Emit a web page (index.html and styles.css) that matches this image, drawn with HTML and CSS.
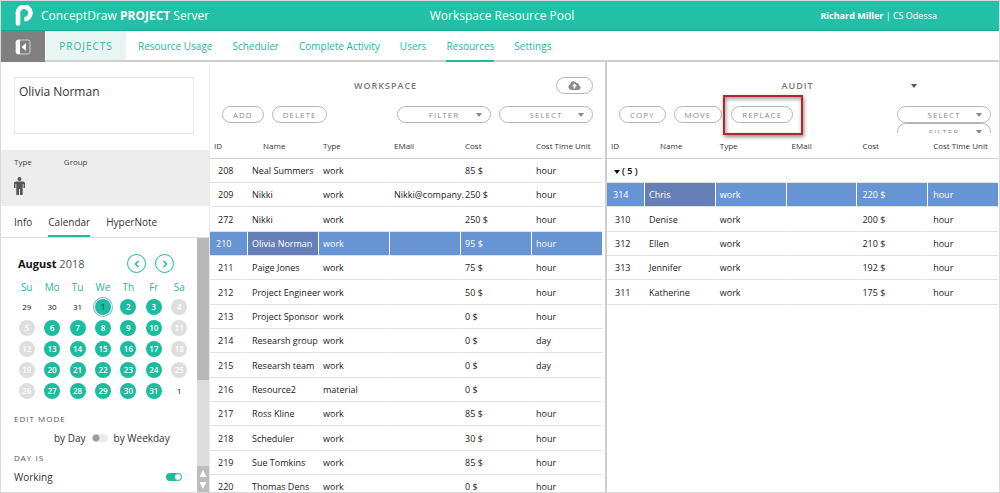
FILE: index.html
```html
<!DOCTYPE html>
<html lang="en">
<head>
<meta charset="utf-8">
<title>ConceptDraw PROJECT Server</title>
<link rel="stylesheet" href="styles.css">
</head>
<body>
<div class="app">
  <header class="topbar">
    <div class="brand">
      <svg class="brand-logo" width="18" height="22" viewBox="0 0 18 22" aria-hidden="true"><path d="M3 19V9.200A6.300 6.300 0 1 1 9.300 14.300" fill="none" stroke="#fff" stroke-width="4.600"/><path d="M.7 18.500h4.600A2.300 2.300 0 0 1 .7 18.500Z" fill="#fff"/></svg>
      <span>ConceptDraw <b>PROJECT</b> Server</span>
    </div>
    <h1 class="page-title">Workspace Resource Pool</h1>
    <div class="account"><b>Richard Miller</b> | CS Odessa</div>
  </header>

  <nav class="nav">
    <button class="nav-toggle" aria-label="Collapse panel">
      <svg width="16" height="16" viewBox="0 0 16 16"><rect x="1" y="1" width="14" height="14" rx="2" fill="none" stroke="#d5d5d5"/><path d="M1 2.500A2 2 0 0 1 3 1h2v14H3A2 2 0 0 1 1 13Z" fill="#fff"/><path d="M11 4v8L6.500 8Z" fill="#fff"/></svg>
    </button>
    <a class="nav-home" href="#">PROJECTS</a>
    <div class="nav-links">
      <a href="#">Resource Usage</a>
      <a href="#">Scheduler</a>
      <a href="#">Complete Activity</a>
      <a href="#">Users</a>
      <a class="is-active" href="#">Resources</a>
      <a href="#">Settings</a>
    </div>
  </nav>

  <main class="columns">
    <aside class="side">
      <div class="side-name"><textarea aria-label="Resource name">Olivia Norman</textarea></div>
      <div class="side-type">
        <div class="type-cell">Type
          <svg width="11" height="18" viewBox="0 0 11 18" aria-hidden="true"><circle cx="5.500" cy="2" r="2" fill="#555"/><path d="M2 4.500h7a2 2 0 0 1 2 2V11H9.500V7H8.700v11H6v-6H5v6H2.300V7H1.500v4H0V6.500a2 2 0 0 1 2-2Z" fill="#555"/></svg>
        </div>
        <div class="type-cell">Group</div>
      </div>
      <div class="side-tabs">
        <a href="#">Info</a>
        <a class="is-active" href="#">Calendar</a>
        <a href="#">HyperNote</a>
      </div>
      <div class="side-scroll">
        <div class="side-body">
          <div class="month">
            <div class="month-name"><b>August</b> 2018</div>
            <div class="month-nav">
              <button aria-label="Previous month"><svg width="8" height="8" viewBox="0 0 8 8"><path d="M5.500 1 2.500 4l3 3" fill="none" stroke="#1bbc9f" stroke-width="1.500"/></svg></button>
              <button aria-label="Next month"><svg width="8" height="8" viewBox="0 0 8 8"><path d="M2.500 1l3 3-3 3" fill="none" stroke="#1bbc9f" stroke-width="1.500"/></svg></button>
            </div>
          </div>
          <table class="calendar">
            <thead><tr><th>Su</th><th>Mo</th><th>Tu</th><th>We</th><th>Th</th><th>Fr</th><th>Sa</th></tr></thead>
            <tbody>
              <tr><td>29</td><td>30</td><td>31</td><td><span class="on today">1</span></td><td><span class="on">2</span></td><td><span class="on">3</span></td><td><span class="off">4</span></td></tr>
              <tr><td><span class="off">5</span></td><td><span class="on">6</span></td><td><span class="on">7</span></td><td><span class="on">8</span></td><td><span class="on">9</span></td><td><span class="on">10</span></td><td><span class="off">11</span></td></tr>
              <tr><td><span class="off">12</span></td><td><span class="on">13</span></td><td><span class="on">14</span></td><td><span class="on">15</span></td><td><span class="on">16</span></td><td><span class="on">17</span></td><td><span class="off">18</span></td></tr>
              <tr><td><span class="off">19</span></td><td><span class="on">20</span></td><td><span class="on">21</span></td><td><span class="on">22</span></td><td><span class="on">23</span></td><td><span class="on">24</span></td><td><span class="off">25</span></td></tr>
              <tr><td><span class="off">26</span></td><td><span class="on">27</span></td><td><span class="on">28</span></td><td><span class="on">29</span></td><td><span class="on">30</span></td><td><span class="on">31</span></td><td>1</td></tr>
            </tbody>
          </table>
          <div class="side-label">EDIT MODE</div>
          <div class="mode-row">
            <span>by Day</span>
            <input class="switch" type="checkbox" aria-label="Edit by weekday">
            <span>by Weekday</span>
          </div>
          <div class="side-label">DAY IS</div>
          <div class="working-row">
            <label for="working">Working</label>
            <input class="switch" id="working" type="checkbox" checked>
          </div>
        </div>
        <div class="scrollbar">
          <div class="scroll-thumb"></div>
          <div class="scroll-arrows">
            <svg width="8" height="8" viewBox="0 0 8 8"><path d="M4 1l3.500 7h-7Z" fill="#fff"/></svg>
            <svg width="8" height="8" viewBox="0 0 8 8"><path d="M4 7 .5 0h7Z" fill="#fff"/></svg>
          </div>
        </div>
      </div>
    </aside>

    <section class="pane workspace">
      <div class="pane-head">
        <h2>WORKSPACE</h2>
        <button class="pill pill-upload" aria-label="Upload"><svg width="13" height="9" viewBox="0 0 13 9"><path d="M3.300 9A3.100 3.100 0 0 1 2 3.200 3.600 3.600 0 0 1 8.600 1.900 2.200 2.200 0 0 1 11 4.400 2.400 2.400 0 0 1 10.600 9Z" fill="#8c8c8c"/><path d="M6.500 2.500 9 5.200H7.300v2.300H5.700V5.200H4Z" fill="#fff"/></svg></button>
      </div>
      <div class="toolbar">
        <button class="pill">ADD</button>
        <button class="pill">DELETE</button>
        <div class="drops">
          <label class="drop"><select class="pill" aria-label="Filter"><option>FILTER</option></select></label>
          <label class="drop"><select class="pill" aria-label="Select"><option>SELECT</option></select></label>
        </div>
      </div>
      <table class="grid">
        <colgroup><col class="c-id"><col><col><col><col><col></colgroup>
        <thead><tr><th>ID</th><th>Name</th><th>Type</th><th>EMail</th><th>Cost</th><th>Cost Time Unit</th></tr></thead>
        <tbody>
          <tr><td>208</td><td>Neal Summers</td><td>work</td><td></td><td>85 $</td><td>hour</td></tr>
          <tr><td>209</td><td>Nikki</td><td>work</td><td>Nikki@company.</td><td>250 $</td><td>hour</td></tr>
          <tr><td>272</td><td>Nikki</td><td>work</td><td></td><td>250 $</td><td>hour</td></tr>
          <tr class="is-selected"><td>210</td><td>Olivia Norman</td><td>work</td><td></td><td>95 $</td><td>hour</td></tr>
          <tr><td>211</td><td>Paige Jones</td><td>work</td><td></td><td>75 $</td><td>hour</td></tr>
          <tr><td>212</td><td>Project Engineer</td><td>work</td><td></td><td>50 $</td><td>hour</td></tr>
          <tr><td>213</td><td>Project Sponsor</td><td>work</td><td></td><td>0 $</td><td>hour</td></tr>
          <tr><td>214</td><td>Researsh group</td><td>work</td><td></td><td>0 $</td><td>day</td></tr>
          <tr><td>215</td><td>Researsh team</td><td>work</td><td></td><td>0 $</td><td>day</td></tr>
          <tr><td>216</td><td>Resource2</td><td>material</td><td></td><td>0 $</td><td></td></tr>
          <tr><td>217</td><td>Ross Kline</td><td>work</td><td></td><td>85 $</td><td>hour</td></tr>
          <tr><td>218</td><td>Scheduler</td><td>work</td><td></td><td>30 $</td><td>hour</td></tr>
          <tr><td>219</td><td>Sue Tomkins</td><td>work</td><td></td><td>85 $</td><td>hour</td></tr>
          <tr><td>220</td><td>Thomas Dens</td><td>work</td><td></td><td>0 $</td><td>hour</td></tr>
        </tbody>
      </table>
    </section>

    <section class="pane audit">
      <div class="pane-head">
        <h2>AUDIT</h2>
        <button class="head-caret" aria-label="Choose project"></button>
      </div>
      <div class="toolbar">
        <button class="pill">COPY</button>
        <button class="pill">MOVE</button>
        <div class="callout"><button class="pill">REPLACE</button></div>
        <div class="drops drops-stacked">
          <label class="drop"><select class="pill" aria-label="Select"><option>SELECT</option></select></label>
          <label class="drop"><select class="pill" aria-label="Filter"><option>FILTER</option></select></label>
        </div>
      </div>
      <table class="grid">
        <colgroup><col class="c-id"><col><col><col><col><col></colgroup>
        <thead><tr><th>ID</th><th>Name</th><th>Type</th><th>EMail</th><th>Cost</th><th>Cost Time Unit</th></tr></thead>
        <tbody>
          <tr class="group"><td colspan="6"><span class="group-caret"></span>( 5 )</td></tr>
          <tr class="is-selected"><td>314</td><td>Chris</td><td>work</td><td></td><td>220 $</td><td>hour</td></tr>
          <tr><td>310</td><td>Denise</td><td>work</td><td></td><td>200 $</td><td>hour</td></tr>
          <tr><td>312</td><td>Ellen</td><td>work</td><td></td><td>210 $</td><td>hour</td></tr>
          <tr><td>313</td><td>Jennifer</td><td>work</td><td></td><td>192 $</td><td>hour</td></tr>
          <tr><td>311</td><td>Katherine</td><td>work</td><td></td><td>175 $</td><td>hour</td></tr>
        </tbody>
      </table>
    </section>
  </main>
</div>
</body>
</html>
```
FILE: styles.css
```css
* { box-sizing: border-box; }

body {
  margin: 0;
  font-family: "Open Sans", "Noto Sans", sans-serif;
  font-size: 9px;
  color: #333;
  background: #fff;
}

button, select, textarea, input { font: inherit; color: inherit; margin: 0; }
a { color: inherit; text-decoration: none; }
button { cursor: pointer; }

.app {
  display: flex;
  flex-direction: column;
  height: 100vh;
  border: 1px solid #d9d9d9;
  overflow: hidden;
}

/* Top bar */
.topbar {
  display: grid;
  grid-template-columns: 1fr auto 1fr;
  align-items: center;
  height: 30px;
  flex: none;
  padding: 0 10px 0 14px;
  background: #23c0a8;
  border-bottom: 1px solid #12ab93;
  color: #fff;
}
.brand { display: flex; align-items: center; gap: 8px; font-size: 12px; }
.brand-logo { flex: none; }
.page-title { margin: 0; font-size: 12px; font-weight: 400; }
.account { padding-right: 52px; text-align: right; }

/* Navigation */
.nav {
  display: flex;
  height: 31px;
  flex: none;
  border-bottom: 2px solid #cfcfcf;
  color: #2ab59d;
}
.nav-toggle {
  display: flex;
  align-items: center;
  justify-content: center;
  width: 44px;
  height: 31px;
  padding: 0;
  border: 0;
  background: #808080;
}
.nav-home {
  display: flex;
  align-items: center;
  justify-content: center;
  width: 80px;
  margin-left: 1px;
  font-size: 10px;
  letter-spacing: 1px;
  background: #e9f5f3;
}
.nav-links { display: flex; gap: 20px; padding-left: 12px; font-size: 10px; }
.nav-links a { height: 31px; line-height: 30px; }
.nav-links .is-active { border-bottom: 2px solid #1bbc9f; }

.columns {
  display: grid;
  grid-template-columns: 209px 397fr 392fr;
  flex: 1;
  min-height: 0;
}

/* Sidebar */
.side { display: flex; flex-direction: column; min-width: 0; min-height: 0; border-right: 1px solid #e8e8e8; }
.side-name { padding: 15px 15px 16px 13px; }
.side-name textarea {
  display: block;
  width: 100%;
  height: 57px;
  padding: 5px 4px;
  border: 1px solid #e6e6e6;
  font-size: 12px;
  line-height: 18px;
  resize: none;
}
.side-type { display: flex; gap: 32px; height: 56px; flex: none; padding: 6px 13px; background: #ededed; font-size: 8px; line-height: 12px; color: #444; }
.type-cell svg { display: block; margin-top: 9px; }
.side-tabs { display: flex; gap: 16px; flex: none; padding-left: 13px; border-bottom: 1px solid #dcdcdc; font-size: 10px; }
.side-tabs a { height: 31px; line-height: 32px; }
.side-tabs .is-active { border-bottom: 2px solid #1bbc9f; }
.side-scroll { display: flex; flex: 1; min-height: 0; overflow: hidden; }
.side-body { flex: 1; min-width: 0; padding: 16px 5px 0 13px; }
.month { display: flex; justify-content: space-between; align-items: center; padding: 0 18px 0 4px; }
.month-name { font-size: 11px; color: #555; }
.month-name b { color: #111; }
.month-nav { display: flex; gap: 9px; }
.month-nav button {
  display: flex;
  align-items: center;
  justify-content: center;
  width: 19px;
  height: 19px;
  padding: 0;
  border: 1px solid #1bbc9f;
  border-radius: 50%;
  background: #fff;
}
.calendar { table-layout: fixed; width: 100%; border-collapse: collapse; margin-top: 4px; font-size: 8px; text-align: center; color: #111; }
.calendar th { height: 19px; padding: 0; font-size: 10px; font-weight: 400; color: #2ab59d; }
.calendar td { height: 21px; padding: 0; }
.calendar span { display: block; width: 16px; margin: 0 auto; border-radius: 50%; line-height: 16px; font-weight: 600; color: #fff; }
.calendar .on { background: #1bbc9f; }
.calendar .off { background: #dedede; }
.calendar .today { color: #1c6e60; box-shadow: 0 0 0 1px #fff, 0 0 0 2px #8fa8dc; }

.side-label { margin-top: 12px; font-size: 8px; line-height: 12px; letter-spacing: 1px; color: #555; }
.mode-row { display: flex; align-items: center; gap: 6px; height: 16px; margin-top: 5px; padding-left: 40px; font-size: 10px; }
.mode-row + .side-label { margin-top: 6px; }
.working-row { display: flex; align-items: center; justify-content: space-between; height: 16px; margin-top: 5px; padding-right: 10px; font-size: 10px; }
.switch {
  appearance: none;
  width: 16px;
  height: 8px;
  border-radius: 4px;
  background: radial-gradient(circle at 4px 4px, #9c9c9c 3px, #ececec 4px);
}
.switch:checked { background: radial-gradient(circle at 12px 4px, #fff 2px, #1bbc9f 4px); }

.scrollbar { display: flex; flex-direction: column; justify-content: space-between; flex: none; width: 12px; background: #dcdcdc; }
.scroll-thumb { height: 56%; background: #b8b8b8; }
.scroll-arrows { display: flex; flex-direction: column; align-items: center; gap: 5px; padding: 3px 0 2px; background: #bdbdbd; }
.scroll-arrows svg { display: block; }

/* Panes */
.pane { min-width: 0; overflow: hidden; }
.workspace { border-right: 2px solid #cfcfcf; }
.pane-head { display: grid; grid-template-columns: 3fr auto 4fr; align-items: center; height: 17px; margin: 15px 12px 0; }
.pane-head h2 { grid-column: 2; margin: 0; font-size: 9px; font-weight: 600; letter-spacing: 1px; color: #777; }
.audit .pane-head { grid-template-columns: 11fr auto 12fr; margin-right: 8px; }
.pill {
  display: block;
  height: 17px;
  padding: 0 10px;
  border: 1px solid #b5b5b5;
  border-radius: 9px;
  background: #fff;
  font-size: 8px;
  line-height: 15px;
  letter-spacing: 1px;
  color: #8c8c8c;
}
.pill-upload { justify-self: end; display: flex; align-items: center; padding: 0 11px; }
.toolbar { display: flex; align-items: flex-start; gap: 8px; height: 27px; padding: 0 12px; margin-top: 12px; }
.drops { display: flex; gap: 8px; margin-left: auto; }
.drop { position: relative; display: block; }
.drop select { appearance: none; width: 94px; padding: 0; text-align-last: center; }
.drop::after {
  content: "";
  position: absolute;
  right: 9px;
  top: 7px;
  border: 3px solid transparent;
  border-top: 4px solid #888;
  border-bottom: 0;
  pointer-events: none;
}
.head-caret {
  justify-self: center;
  width: 6px;
  height: 4px;
  margin-left: 24px;
  padding: 0;
  border: 3px solid transparent;
  border-top: 4px solid #555;
  border-bottom: 0;
  background: none;
}
.audit .toolbar { padding-right: 8px; }
.drops-stacked { display: block; overflow: hidden; height: 27px; }
.callout { position: relative; margin-left: 1px; }
.callout::after {
  content: "";
  position: absolute;
  inset: -11px -10px -12px -8px;
  border: 2px solid #b3262b;
  box-shadow: 1px 2px 4px rgba(0, 0, 0, .45), inset 1px 2px 4px rgba(0, 0, 0, .4);
  pointer-events: none;
}

/* Data grids */
.grid { table-layout: fixed; width: 100%; border-spacing: 0; color: #222; }
.workspace .grid { padding-right: 2px; }
.c-id { width: 38px; }
.grid th { height: 26px; padding: 0 0 0 4px; border-bottom: 1px solid #d2d2d2; font-size: 8px; font-weight: 400; text-align: left; color: #333; white-space: nowrap; }
.grid th:nth-child(2) { padding-left: 15px; }
.grid td { height: 24px; padding: 0 0 0 4px; border-right: 1px solid #fff; border-bottom: 1px solid #e2e2e2; white-space: nowrap; }
.grid tr:nth-child(3n) td { height: 25px; }
.audit .grid tr > :nth-child(n+4) { padding-left: 5px; }
.grid td:first-child { padding-left: 8px; }
.grid .is-selected td { background: #6795d4; color: #fff; }
.grid .is-selected td:first-child { padding-left: 6px; }
.grid .is-selected td:nth-child(2) { background: #677fb7; }
.grid .group td { padding-left: 7px; font-weight: 600; color: #000; }
.group-caret { display: inline-block; margin-right: 2px; vertical-align: middle; border: 3px solid transparent; border-top: 4px solid #000; border-bottom: 0; }
```
